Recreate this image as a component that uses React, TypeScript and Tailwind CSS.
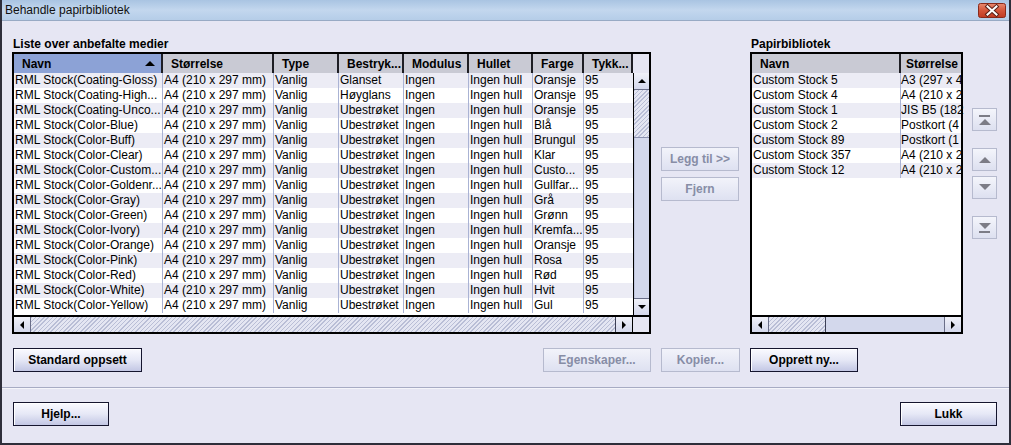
import React from "react";

const leftCols = [
  { label: "Navn", w: "w-[149px]" },
  { label: "Størrelse", w: "w-[111px]" },
  { label: "Type", w: "w-[65px]" },
  { label: "Bestryk...", w: "w-[65px]" },
  { label: "Modulus", w: "w-[65px]" },
  { label: "Hullet", w: "w-[64px]" },
  { label: "Farge", w: "w-[51px]" },
  { label: "Tykk...", w: "w-[49px]" },
];

const media: [string, string, string][] = [
  ["RML Stock(Coating-Gloss)", "Glanset", "Oransje"],
  ["RML Stock(Coating-High...", "Høyglans", "Oransje"],
  ["RML Stock(Coating-Unco...", "Ubestrøket", "Oransje"],
  ["RML Stock(Color-Blue)", "Ubestrøket", "Blå"],
  ["RML Stock(Color-Buff)", "Ubestrøket", "Brungul"],
  ["RML Stock(Color-Clear)", "Ubestrøket", "Klar"],
  ["RML Stock(Color-Custom...", "Ubestrøket", "Custo..."],
  ["RML Stock(Color-Goldenr...", "Ubestrøket", "Gullfar..."],
  ["RML Stock(Color-Gray)", "Ubestrøket", "Grå"],
  ["RML Stock(Color-Green)", "Ubestrøket", "Grønn"],
  ["RML Stock(Color-Ivory)", "Ubestrøket", "Kremfa..."],
  ["RML Stock(Color-Orange)", "Ubestrøket", "Oransje"],
  ["RML Stock(Color-Pink)", "Ubestrøket", "Rosa"],
  ["RML Stock(Color-Red)", "Ubestrøket", "Rød"],
  ["RML Stock(Color-White)", "Ubestrøket", "Hvit"],
  ["RML Stock(Color-Yellow)", "Ubestrøket", "Gul"],
];

// size column is clipped in the original, keep only what shows
const library: [string, string][] = [
  ["Custom Stock 5", "A3 (297 x 4"],
  ["Custom Stock 4", "A4 (210 x 2"],
  ["Custom Stock 1", "JIS B5 (182"],
  ["Custom Stock 2", "Postkort (4"],
  ["Custom Stock 89", "Postkort (1"],
  ["Custom Stock 357", "A4 (210 x 2"],
  ["Custom Stock 12", "A4 (210 x 2"],
];

const hatch =
  "bg-[repeating-linear-gradient(135deg,#b9bed6_0px,#b9bed6_1px,#e4e6f2_1px,#e4e6f2_3px)]";

function Tri({ dir, color = "#000" }: { dir: "up" | "down" | "left" | "right"; color?: string }) {
  const pts = {
    up: "0,6 4,2 8,6",
    down: "0,2 8,2 4,6",
    left: "6,0 6,8 2,4",
    right: "2,0 2,8 6,4",
  }[dir];
  return (
    <svg width="8" height="8" viewBox="0 0 8 8">
      <polygon points={pts} fill={color} />
    </svg>
  );
}

function ScrollBtn({ dir, className = "" }: { dir: "up" | "down" | "left" | "right"; className?: string }) {
  return (
    <div
      className={`flex items-center justify-center bg-linear-to-b from-[#f0f1f9] to-[#d4d8ec] border-[#6a6e88] ${className}`}
    >
      <Tri dir={dir} />
    </div>
  );
}

function Btn({
  children,
  w,
  disabled,
}: {
  children: React.ReactNode;
  w: string;
  disabled?: boolean;
}) {
  return (
    <div
      className={`${w} h-[24px] shrink-0 flex items-center justify-center text-[12px] font-bold ${
        disabled
          ? "border border-[#b6bace] text-[#878da6] bg-linear-to-b from-[#f2f3fa] to-[#dee1f1]"
          : "border border-[#15152e] text-black bg-linear-to-b from-[#fafaff] via-[#e6e8f6] to-[#c3c7e4] shadow-[inset_1px_1px_0_#ffffff]"
      }`}
    >
      {children}
    </div>
  );
}

function SideBtn({ kind }: { kind: "top" | "up" | "down" | "bottom" }) {
  return (
    <div className="w-[25px] h-[23px] flex flex-col items-center justify-center gap-px border border-[#b6bace] bg-linear-to-b from-[#f4f5fb] to-[#dde0f0]">
      {kind === "top" && <div className="w-[11px] h-[2px] bg-[#7c7c86]" />}
      {kind === "bottom" ? (
        <>
          <svg width="12" height="7" viewBox="0 0 12 7">
            <polygon points="0,0 12,0 6,6" fill="#7c7c86" />
          </svg>
          <div className="w-[11px] h-[2px] bg-[#7c7c86]" />
        </>
      ) : kind === "down" ? (
        <svg width="12" height="7" viewBox="0 0 12 7">
          <polygon points="0,0 12,0 6,6" fill="#7c7c86" />
        </svg>
      ) : (
        <svg width="12" height="7" viewBox="0 0 12 7">
          <polygon points="0,7 12,7 6,1" fill="#7c7c86" />
        </svg>
      )}
    </div>
  );
}

function LeftTable() {
  return (
    <div className="w-[639px] h-[282px] border-2 border-black flex flex-col bg-white">
      {/* header */}
      <div className="flex h-[19px] shrink-0">
        {leftCols.map((c, i) => (
          <div
            key={c.label}
            className={`${c.w} h-full flex items-center pl-2 pr-1 font-bold border-r-2 border-[#1e1e24] ${
              i === 0 ? "bg-[#8ca2d6] justify-between" : "bg-[#c9cad4]"
            }`}
          >
            <span>{c.label}</span>
            {i === 0 && (
              <svg width="10" height="7" viewBox="0 0 10 7" className="mr-[2px]">
                <polygon points="0,6 5,1 10,6" fill="#000" />
              </svg>
            )}
          </div>
        ))}
        <div className="flex-1 bg-[#e6e6f3]" />
      </div>
      {/* body */}
      <div className="flex h-[242px] shrink-0">
        <div className="w-[619px] flex flex-col">
          {media.map((r, i) => {
            const vals = [r[0], "A4 (210 x 297 mm)", "Vanlig", r[1], "Ingen", "Ingen hull", r[2], "95"];
            return (
              <div key={i} className={`flex h-[15px] ${i % 2 === 0 ? "bg-[#ececf5]" : "bg-white"}`}>
                {vals.map((v, j) => (
                  <div
                    key={j}
                    className={`${leftCols[j].w} h-full pl-px leading-[15px] whitespace-nowrap overflow-hidden ${
                      j < 7 ? "border-r border-[#aab3d4]" : ""
                    }`}
                  >
                    {v}
                  </div>
                ))}
              </div>
            );
          })}
        </div>
        {/* vertical scrollbar */}
        <div className="w-[16px] border-l border-black flex flex-col bg-[#d3d8ec]">
          <ScrollBtn dir="up" className="h-[17px] border-b" />
          <div className={`h-[48px] border-b border-[#8c92b0] ${hatch}`} />
          <div className="flex-1 shadow-[inset_1px_0_0_#bfc5dd]" />
          <ScrollBtn dir="down" className="h-[17px] border-t" />
        </div>
      </div>
      {/* horizontal scrollbar */}
      <div className="flex h-[17px] shrink-0 border-t-2 border-black">
        <div className="w-[619px] flex bg-[#d3d8ec]">
          <ScrollBtn dir="left" className="w-[17px] border-r" />
          <div className={`flex-1 border-r border-[#3c3f55] ${hatch}`} />
          <ScrollBtn dir="right" className="w-[17px] border-r border-r-black" />
        </div>
        <div className="flex-1 bg-[#e6e6f3]" />
      </div>
    </div>
  );
}

function RightTable() {
  return (
    <div className="w-[213px] h-[282px] border-2 border-black flex flex-col bg-white">
      <div className="flex h-[19px] shrink-0 font-bold bg-[#c9cad4]">
        <div className="w-[149px] h-full flex items-center pl-2 border-r-2 border-[#1e1e24]">Navn</div>
        <div className="flex-1 h-full flex items-center pl-[5px] overflow-hidden whitespace-nowrap">Størrelse</div>
      </div>
      <div className="h-[242px] shrink-0 flex flex-col">
        {library.map((r, i) => (
          <div key={i} className={`flex h-[15px] ${i % 2 === 0 ? "bg-[#ececf5]" : "bg-white"}`}>
            <div className="w-[149px] h-full pl-px leading-[15px] border-r border-[#aab3d4] whitespace-nowrap overflow-hidden">
              {r[0]}
            </div>
            <div className="w-[58px] h-full leading-[15px] whitespace-nowrap">{r[1]}</div>
          </div>
        ))}
      </div>
      <div className="flex h-[17px] shrink-0 border-t-2 border-black bg-[#d3d8ec]">
        <ScrollBtn dir="left" className="w-[17px] border-r" />
        <div className={`w-[57px] border-r border-[#3c3f55] ${hatch}`} />
        <div className="flex-1" />
        <ScrollBtn dir="right" className="w-[17px] border-l" />
      </div>
    </div>
  );
}

export default function App() {
  return (
    <div className="w-[1011px] h-[445px] flex flex-col bg-[#e6e6f3] border-x-2 border-b-2 border-[#2e2e3a] text-[12px] text-black font-['Liberation_Sans',Arial,sans-serif] overflow-hidden">
      {/* title bar */}
      <div className="h-[21px] shrink-0 flex items-center justify-between pl-[3px] pr-[3px] bg-linear-to-b from-[#a9c4e2] via-[#c3d7ee] to-[#b5cde8] border-b border-[#98aac4]">
        <span className="text-[12px] text-[#101010]">Behandle papirbibliotek</span>
        <svg width="28" height="15" viewBox="0 0 28 15">
          <defs>
            <linearGradient id="cl" x1="0" y1="0" x2="0" y2="1">
              <stop offset="0" stopColor="#e88a70" />
              <stop offset="0.5" stopColor="#d4553a" />
              <stop offset="1" stopColor="#c03a22" />
            </linearGradient>
          </defs>
          <rect x="0.5" y="0.5" width="27" height="14" rx="2" fill="url(#cl)" stroke="#8a2a1a" />
          <path d="M9.5 3.5 L18.5 11.5 M18.5 3.5 L9.5 11.5" stroke="#5a2018" strokeWidth="4" strokeLinecap="square" />
          <path d="M9.5 3.5 L18.5 11.5 M18.5 3.5 L9.5 11.5" stroke="#ffffff" strokeWidth="2" strokeLinecap="square" />
        </svg>
      </div>

      {/* main area */}
      <div className="flex pt-[15px] pl-[10px] shrink-0">
        <div className="flex flex-col">
          <div className="h-[16px] pl-px font-bold leading-[16px]">Liste over anbefalte medier</div>
          <LeftTable />
        </div>
        <div className="ml-[10px] pt-[111px] flex flex-col gap-[6px]">
          <Btn w="w-[78px]" disabled>
            Legg til &gt;&gt;
          </Btn>
          <Btn w="w-[78px]" disabled>
            Fjern
          </Btn>
        </div>
        <div className="ml-[11px] flex flex-col">
          <div className="h-[16px] pl-px font-bold leading-[16px]">Papirbibliotek</div>
          <RightTable />
        </div>
        <div className="ml-[9px] pt-[72px] flex flex-col">
          <SideBtn kind="top" />
          <div className="h-[17px]" />
          <SideBtn kind="up" />
          <div className="h-[5px]" />
          <SideBtn kind="down" />
          <div className="h-[17px]" />
          <SideBtn kind="bottom" />
        </div>
      </div>

      {/* action buttons */}
      <div className="flex mt-[14px] pl-[11px] shrink-0">
        <Btn w="w-[129px]">Standard oppsett</Btn>
        <div className="ml-[401px]">
          <Btn w="w-[108px]" disabled>
            Egenskaper...
          </Btn>
        </div>
        <div className="ml-[10px]">
          <Btn w="w-[79px]" disabled>
            Kopier...
          </Btn>
        </div>
        <div className="ml-[10px]">
          <Btn w="w-[108px]">Opprett ny...</Btn>
        </div>
      </div>

      {/* separator */}
      <div className="mt-[15px] h-[2px] shrink-0 border-t border-[#a7abc3] bg-white/60" />

      {/* footer */}
      <div className="flex justify-between mt-[13px] pl-[11px] pr-[12px] shrink-0">
        <Btn w="w-[96px]">Hjelp...</Btn>
        <Btn w="w-[97px]">Lukk</Btn>
      </div>
    </div>
  );
}
